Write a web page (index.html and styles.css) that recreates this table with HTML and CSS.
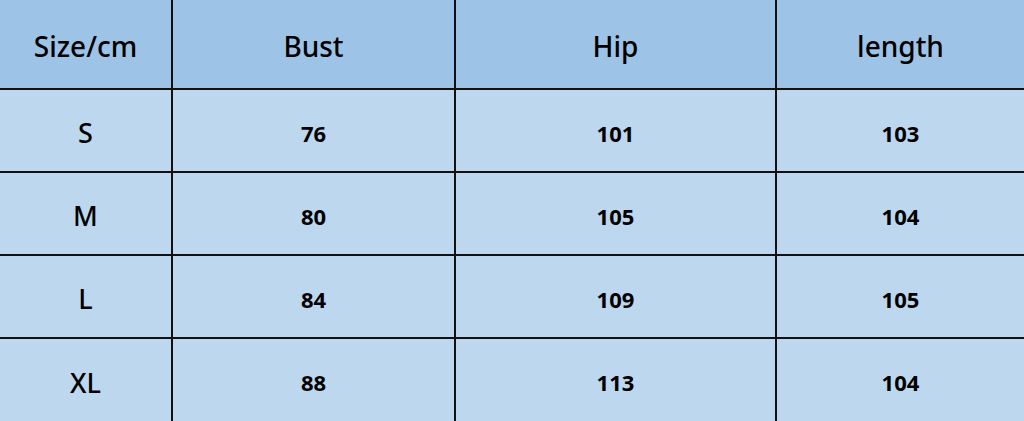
FILE: index.html
```html
<!DOCTYPE html>
<html>
<head>
<meta charset="utf-8">
<link rel="stylesheet" href="styles.css">
</head>
<body>
<div class="table">
  <div class="cell head">Size/cm</div>
  <div class="cell head">Bust</div>
  <div class="cell head">Hip</div>
  <div class="cell head">length</div>

  <div class="cell size">S</div>
  <div class="cell num">76</div>
  <div class="cell num">101</div>
  <div class="cell num">103</div>

  <div class="cell size">M</div>
  <div class="cell num">80</div>
  <div class="cell num">105</div>
  <div class="cell num">104</div>

  <div class="cell size">L</div>
  <div class="cell num">84</div>
  <div class="cell num">109</div>
  <div class="cell num">105</div>

  <div class="cell size">XL</div>
  <div class="cell num">88</div>
  <div class="cell num">113</div>
  <div class="cell num">104</div>
</div>
</body>
</html>
```

FILE: styles.css
```css
html, body {
  margin: 0;
  padding: 0;
  width: 1024px;
  height: 421px;
  overflow: hidden;
  background: #bdd7ee;
}
.table {
  display: grid;
  grid-template-columns: 171px 281px 319px 1fr;
  grid-template-rows: 88px 81px 81px 81px 1fr;
  gap: 2px;
  background: #111;
  width: 1024px;
  height: 421px;
  font-family: "Noto Sans", "Open Sans", sans-serif;
  color: #000;
}
.cell {
  display: flex;
  align-items: center;
  justify-content: center;
  padding-top: 4px;
  background: #bdd7ee;
}
.head {
  background: #9dc3e6;
  font-size: 28px;
  font-weight: 500;
}
.size {
  font-size: 27px;
  font-weight: 500;
}
.num {
  font-size: 22px;
  font-weight: 700;
}
```
